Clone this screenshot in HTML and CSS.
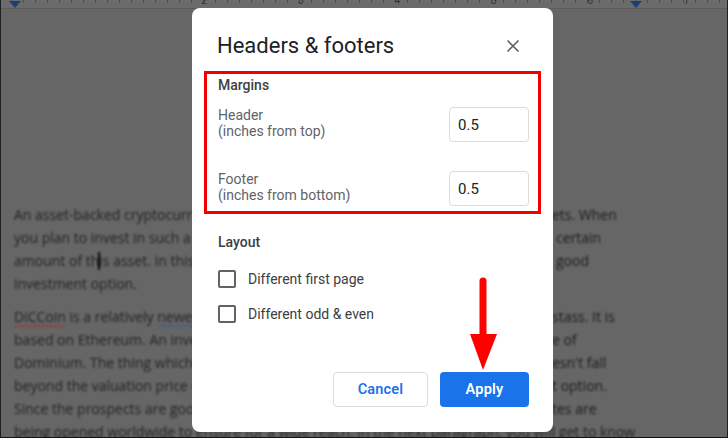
FILE: index.html
```html
<!DOCTYPE html>
<html lang="en">
<head>
    <meta charset="UTF-8">
    <meta name="viewport" content="width=device-width, initial-scale=1.0">
    <title>Headers &amp; footers</title>
    <link rel="stylesheet" href="styles.css">
</head>
<body>

<div class="screen">
    <div class="ruler">
        <span class="marker"></span>
        <div class="ruler-nums">
            <span></span><span></span><span>2</span><span>3</span><span>4</span><span>5</span><span>6</span><span>7</span>
        </div>
        <span class="marker right"></span>
    </div>

    <div class="doc">
        <div class="para">
            <div class="line"><span class="l">An asset-backed cryptocurrenc</span><span class="r">ets. When</span></div>
            <div class="line"><span class="l">you plan to invest in such a t</span><span class="r gap">certain</span></div>
            <div class="line"><span class="l">amount of th<i class="caret"></i>is asset. In this</span><span class="r gap">good</span></div>
            <div class="line"><span class="l">investment option.</span></div>
        </div>
        <div class="para">
            <div class="line"><span class="l"><u class="spell">DiCCoin</u> is a relatively <u class="grammar">newer</u></span><span class="r">stass. It is</span></div>
            <div class="line"><span class="l">based on Ethereum. An invest</span><span class="r">e of</span></div>
            <div class="line"><span class="l">Dominium. The thing which attr</span><span class="r">esn't fall</span></div>
            <div class="line"><span class="l">beyond the valuation price of</span><span class="r">t option.</span></div>
            <div class="line"><span class="l">Since the prospects are good,</span><span class="r">tes are</span></div>
            <div class="line">being opened worldwide to ensure for a wide reach. In the next paragraph, you will get to know</div>
        </div>
    </div>

    <div class="dialog">
        <div class="dialog-head">
            <h1>Headers &amp; footers</h1>
            <svg class="close" width="24" height="24" viewBox="0 0 24 24">
                <path d="M6.5 6.5l11 11M17.5 6.5l-11 11" stroke="#5f6368" stroke-width="1.6" fill="none"/>
            </svg>
        </div>

        <div class="margins">
            <div class="section-title">Margins</div>
            <div class="m-row">
                <div class="m-label">Header<br>(inches from top)</div>
                <input class="m-input" type="text" value="0.5">
            </div>
            <div class="m-row footer-row">
                <div class="m-label">Footer<br>(inches from bottom)</div>
                <input class="m-input" type="text" value="0.5">
            </div>
        </div>

        <div class="layout">
            <div class="section-title">Layout</div>
            <label class="check"><span class="box"></span>Different first page</label>
            <label class="check"><span class="box"></span>Different odd &amp; even</label>
        </div>

        <div class="actions">
            <button class="cancel">Cancel</button>
            <button class="apply">Apply</button>
        </div>

        <svg class="arrow" width="32" height="96" viewBox="0 0 32 96">
            <line x1="14" y1="5" x2="14" y2="62" stroke="#ff0000" stroke-width="7" stroke-linecap="round"/>
            <polygon points="1,58 28,58 14,94" fill="#ff0000"/>
        </svg>
    </div>
</div>

</body>
</html>
```

FILE: styles.css
```css
* { box-sizing: border-box; }
body {
    margin: 0;
    width: 728px;
    height: 438px;
    overflow: hidden;
    background: #666;
}
.screen {
    position: relative;
    height: 438px;
    border-left: 1px solid #1e1e1e;
    border-right: 1px solid #1e1e1e;
    border-bottom: 1px solid #111;
    overflow: hidden;
}

/* ruler */
.ruler {
    position: relative;
    height: 9px;
    background: #6b6b6b repeating-linear-gradient(to right, #4d4d4d 0 1px, transparent 1px 12px) 10px 0 / 100% 3px no-repeat;
    border-bottom: 1px solid #5b5b5b;
    overflow: hidden;
}
.ruler-nums {
    display: flex;
    margin-left: -38px;
}
.ruler-nums span {
    flex: 0 0 96.5px;
    text-align: center;
    font: 10px "Liberation Sans", Arial, sans-serif;
    color: #2f2f2f;
    line-height: 10px;
    margin-top: -4px;
}
.marker {
    position: absolute;
    top: 1px;
    left: 8px;
    border-left: 6px solid transparent;
    border-right: 6px solid transparent;
    border-top: 7px solid #1d3f78;
}
.marker.right { left: 629px; }

/* dimmed document */
.doc {
    padding: 194px 0 0 13px;
    font: 14px "Open Sans", "DejaVu Sans", sans-serif;
    color: #242424;
    line-height: 23px;
}
.para + .para { margin-top: 10px; }
.line {
    display: flex;
    white-space: nowrap;
    filter: blur(0.8px);
}
.l {
    flex: 0 0 538px;
    overflow: hidden;
}
.r { color: #1c1c1c; }
.r.gap { padding-left: 4px; }
.caret {
    display: inline-block;
    width: 2px;
    height: 18px;
    margin: 0 -1px;
    vertical-align: -4px;
    background: #0c0c0c;
}
.spell { text-decoration: underline #8a4646 2px; text-underline-offset: 3px; }
.grammar { text-decoration: underline #4f5f7f 2px; text-underline-offset: 3px; }

/* dialog */
.dialog {
    position: absolute;
    left: 191px;
    top: 8px;
    width: 361px;
    height: 424px;
    background: #fff;
    border-radius: 8px;
    display: flex;
    flex-direction: column;
    font-family: Roboto, "Liberation Sans", sans-serif;
}
.dialog-head {
    height: 63px;
    padding: 13px 28px 0 25px;
    display: flex;
    justify-content: space-between;
    align-items: center;
}
.dialog-head h1 {
    margin: 0;
    height: 50px;
    line-height: 50px;
    font-size: 22px;
    font-weight: 400;
    color: #202124;
}

.margins {
    margin: 0 12px;
    height: 143px;
    border: 3px solid #f20000;
    padding: 1px 9px 0 11px;
}
.section-title {
    font-size: 14px;
    font-weight: 500;
    line-height: 20px;
    color: #3c4043;
}
.m-row {
    display: flex;
    justify-content: space-between;
    align-items: flex-start;
    margin-top: 12px;
}
.m-row.footer-row { margin-top: 29px; }
.m-label {
    font-size: 14px;
    line-height: 16px;
    color: #5f6368;
}
.m-input {
    width: 80px;
    height: 35px;
    border: 1px solid #dadce0;
    border-radius: 4px;
    padding: 0 8px;
    font: 15px Roboto, sans-serif;
    color: #202124;
}

.layout {
    padding: 18px 0 0 26px;
}
.check {
    display: flex;
    align-items: center;
    margin-top: 18px;
    font-size: 14px;
    line-height: 18px;
    color: #3c4043;
}
.check + .check { margin-top: 17px; }
.box {
    width: 18px;
    height: 18px;
    border: 2px solid #5f6368;
    border-radius: 2px;
    margin-right: 12px;
}

.actions {
    margin-top: auto;
    padding: 0 24px 25px 0;
    display: flex;
    justify-content: flex-end;
    gap: 12px;
}
.actions button {
    height: 35px;
    border-radius: 4px;
    font: 600 14.5px Roboto, sans-serif;
    letter-spacing: 0.2px;
}
.cancel {
    width: 95px;
    background: #fff;
    border: 1px solid #dadce0;
    color: #1a73e8;
}
.apply {
    width: 89px;
    background: #1a73e8;
    border: none;
    color: #fff;
}
.arrow {
    position: absolute;
    left: 277px;
    top: 268px;
}
```
